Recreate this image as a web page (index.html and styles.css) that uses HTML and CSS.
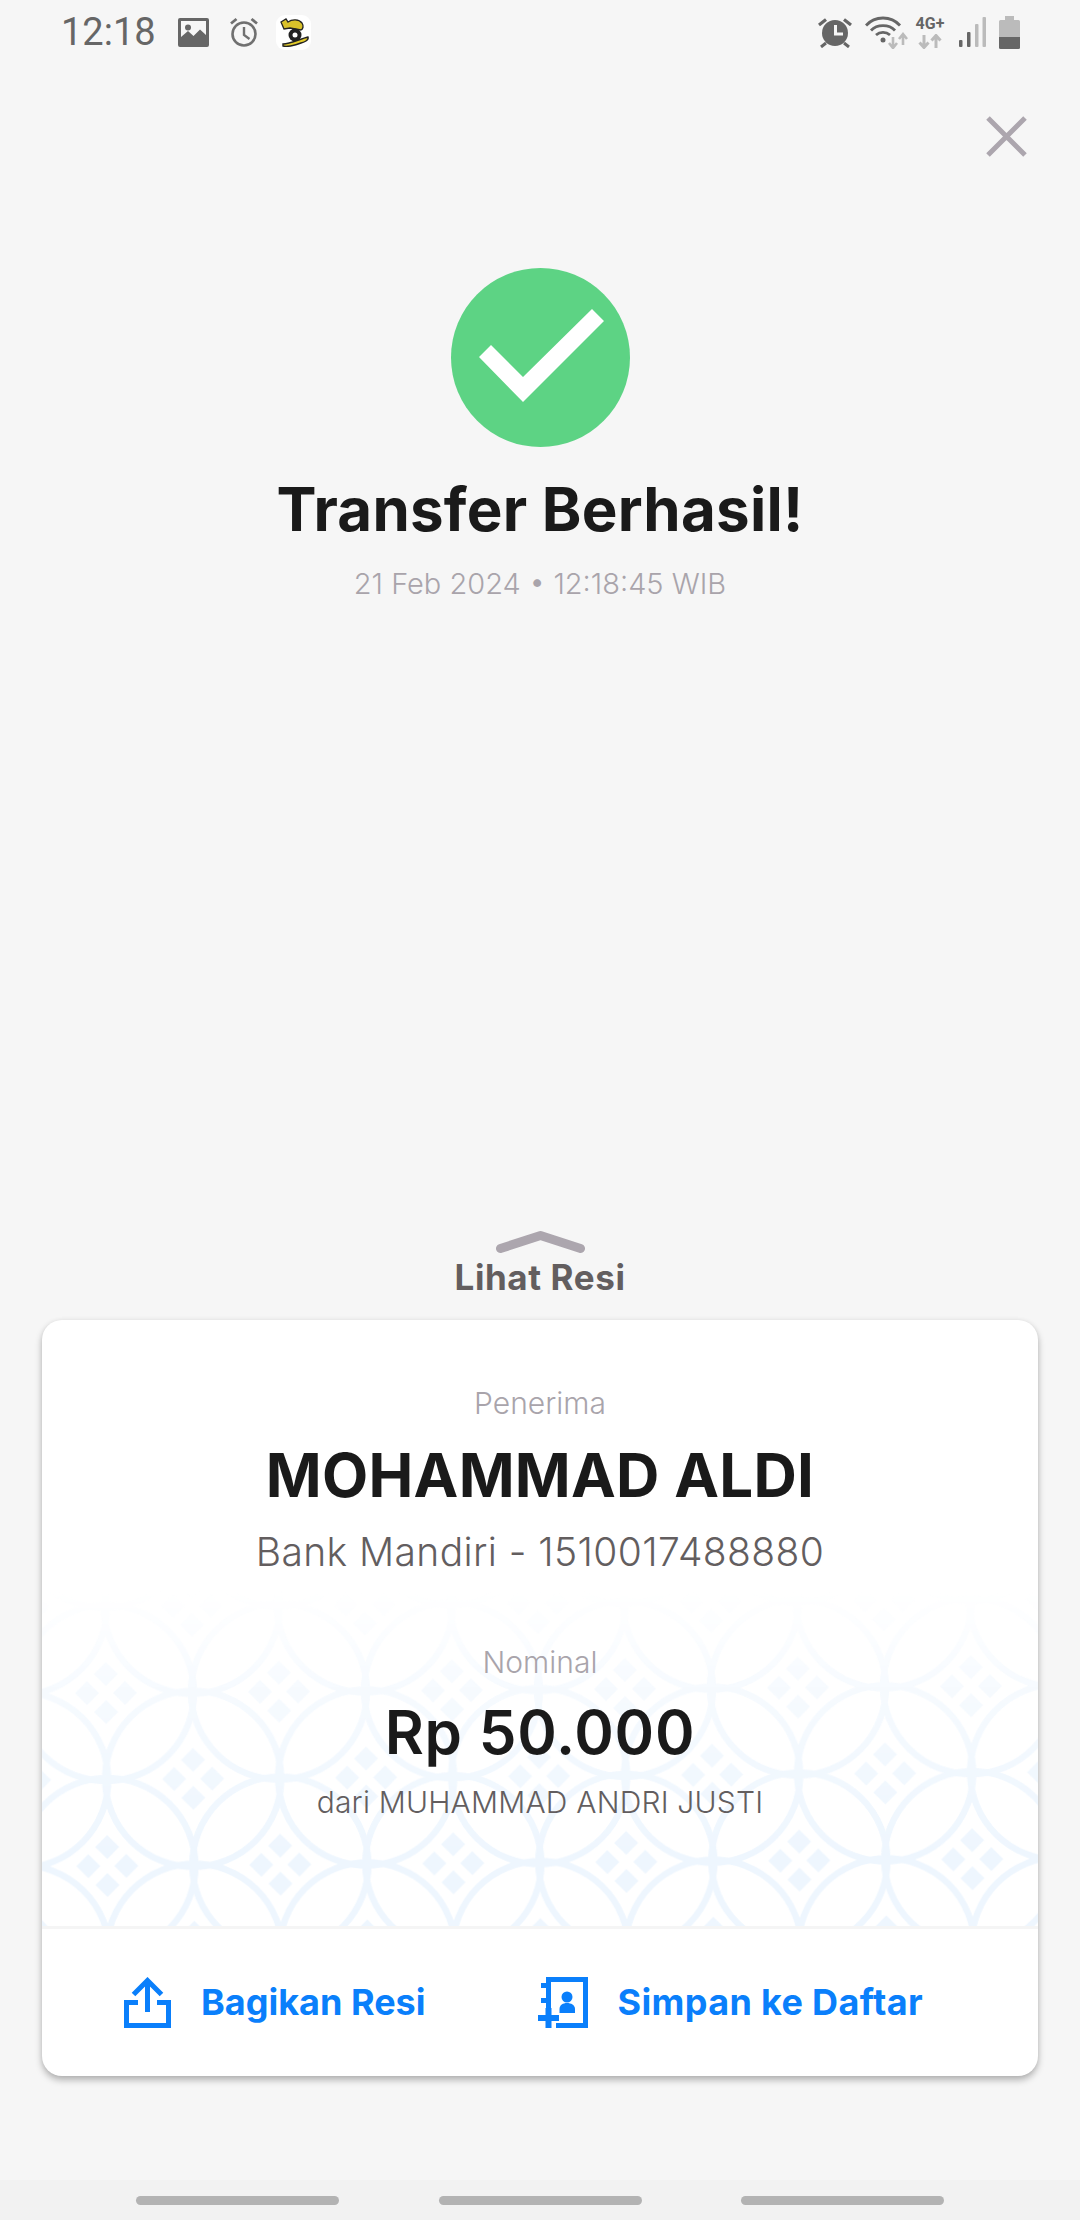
FILE: index.html
```html
<!DOCTYPE html>
<html lang="en">
<head>
    <meta charset="UTF-8">
    <meta name="viewport" content="width=device-width, initial-scale=1.0">
    <title>Transfer Berhasil</title>
    <link rel="stylesheet" href="styles.css">
</head>
<body>
    <div class="screen">
        <!-- Status bar -->
        <div class="status-bar">
            <div class="status-left">
                <span class="clock">12:18</span>
                <svg class="ic-image" width="31" height="29" viewBox="0 0 31 29">
                    <path fill="#666" fill-rule="evenodd" d="M2 0H29a2 2 0 0 1 2 2V27a2 2 0 0 1-2 2H2a2 2 0 0 1-2-2V2A2 2 0 0 1 2 0ZM3 3V19L10 13L15.5 18L22 11.5L28 17V3Z"/>
                    <circle cx="10" cy="9.5" r="3" fill="#666"/>
                </svg>
                <svg class="ic-alarm" width="30" height="30" viewBox="0 0 30 30">
                    <circle cx="15" cy="17" r="11.5" fill="none" stroke="#707070" stroke-width="2.6"/>
                    <path d="M15 10V18L20.5 22" fill="none" stroke="#707070" stroke-width="2.4"/>
                    <path d="M2 6.5L7.5 2M28 6.5L22.5 2" fill="none" stroke="#707070" stroke-width="2.8"/>
                </svg>
                <svg class="ic-app" width="35" height="35" viewBox="0 0 35 35">
                    <rect width="35" height="35" rx="9" fill="#fff"/>
                    <path d="M5 7L10 4L12 7C16 4 23 4 26 8C28 11 27 14 25 15L14 13L8 14Z" fill="#d9c12a" stroke="#222" stroke-width="1.3"/>
                    <circle cx="19" cy="20" r="6.5" fill="#222"/>
                    <circle cx="19" cy="20" r="2.5" fill="#fff"/>
                    <path d="M7 29C14 29 24 24 32 22C33 25 29 27 25 28C18 31 10 32 7 31Z" fill="#e3cb2a" stroke="#222" stroke-width="1.4"/>
                </svg>
            </div>
            <div class="status-right">
                <svg width="34" height="31" viewBox="0 0 34 31">
                    <circle cx="17" cy="16" r="13" fill="#666"/>
                    <path d="M17.5 8V17H25" fill="none" stroke="#f6f6f6" stroke-width="3"/>
                    <path d="M1 8L8 2.5M33 8L26 2.5" fill="none" stroke="#666" stroke-width="3.2"/>
                    <path d="M3 30L8 26M31 30L26 26" fill="none" stroke="#666" stroke-width="3"/>
                </svg>
                <svg width="43" height="33" viewBox="0 0 43 33">
                    <path d="M1 9.5C10 -0.5 26 -0.5 35 9.5M6 14.5C12 8 24 8 30 14.5M11 19C15 15.5 21 15.5 25 19" fill="none" stroke="#666" stroke-width="2.8"/>
                    <circle cx="18" cy="24" r="2.5" fill="#666"/>
                    <path d="M28 21V31M24 27L28 32L32 27" fill="none" stroke="#bbb" stroke-width="2.6"/>
                    <path d="M38 29V19M34 23L38 18L42 23" fill="none" stroke="#bbb" stroke-width="2.6"/>
                </svg>
                <div class="net-type">
                    <span class="net-label">4G+</span>
                    <svg width="24" height="15" viewBox="0 0 24 15">
                        <path d="M6 1V13M1.5 8.5L6 13.5L10.5 8.5" fill="none" stroke="#bbb" stroke-width="3"/>
                        <path d="M18 14V2M13.5 6.5L18 1.5L22.5 6.5" fill="none" stroke="#bbb" stroke-width="3"/>
                    </svg>
                </div>
                <svg class="ic-signal" width="27" height="30" viewBox="0 0 27 30">
                    <rect x="0" y="23" width="3.5" height="7" rx="1" fill="#666"/>
                    <rect x="8" y="15" width="3.5" height="15" rx="1" fill="#666"/>
                    <rect x="16" y="7" width="3.5" height="23" rx="1" fill="#bbb"/>
                    <rect x="23.5" y="0" width="3.5" height="30" rx="1" fill="#bbb"/>
                </svg>
                <svg width="21" height="33" viewBox="0 0 21 33">
                    <path d="M6 0H15V4H19.5A1.5 1.5 0 0 1 21 5.5V21H0V5.5A1.5 1.5 0 0 1 1.5 4H6Z" fill="#bbb"/>
                    <path d="M0 21H21V31.5A1.5 1.5 0 0 1 19.5 33H1.5A1.5 1.5 0 0 1 0 31.5Z" fill="#666"/>
                </svg>
            </div>
        </div>

        <!-- Close button -->
        <div class="close-row">
            <svg width="41" height="41" viewBox="0 0 41 41">
                <path d="M2 2L39 39M39 2L2 39" fill="none" stroke="#aca6ae" stroke-width="5"/>
            </svg>
        </div>

        <!-- Success message -->
        <div class="success">
            <svg class="success-icon" width="179" height="179" viewBox="0 0 179 179">
                <circle cx="89.5" cy="89.5" r="89.5" fill="#5dd384"/>
                <path d="M28 89L40 77L72 109L141 41L153 53L72 134Z" fill="#fff"/>
            </svg>
            <h1 class="success-title">Transfer Berhasil!</h1>
            <p class="success-date">21 Feb 2024 • 12:18:45 WIB</p>
        </div>

        <div class="spacer"></div>

        <!-- Receipt toggle -->
        <div class="receipt-toggle">
            <svg width="89" height="23" viewBox="0 0 89 23">
                <path d="M4.5 18.5L44.5 5.5L84.5 18.5" fill="none" stroke="#aca6ae" stroke-width="9" stroke-linecap="round" stroke-linejoin="round"/>
            </svg>
            <span class="receipt-label">Lihat Resi</span>
        </div>

        <!-- Transfer card -->
        <div class="card">
            <div class="card-body">
                <svg class="kawung" width="996" height="336" viewBox="0 0 996 336">
                    <defs>
                        <g id="kawung-cell">
                            <circle r="88" fill="none" stroke="#eef6fe" stroke-width="6.5"/>
                            <path fill="#eef6fe" d="M0 -31L12 -19L0 -7L-12 -19ZM0 31L12 19L0 7L-12 19ZM-31 0L-19 12L-7 0L-19 -12ZM31 0L19 12L7 0L19 -12Z"/>
                        </g>
                        <pattern id="kawung-tile" width="173" height="173" patternUnits="userSpaceOnUse" patternTransform="translate(64 103) rotate(-0.45)">
                            <use href="#kawung-cell" x="0" y="0"/>
                            <use href="#kawung-cell" x="173" y="0"/>
                            <use href="#kawung-cell" x="0" y="173"/>
                            <use href="#kawung-cell" x="173" y="173"/>
                            <use href="#kawung-cell" x="86.5" y="86.5"/>
                            <use href="#kawung-cell" x="-86.5" y="86.5"/>
                            <use href="#kawung-cell" x="259.5" y="86.5"/>
                            <use href="#kawung-cell" x="86.5" y="-86.5"/>
                            <use href="#kawung-cell" x="86.5" y="259.5"/>
                        </pattern>
                    </defs>
                    <rect width="996" height="336" fill="url(#kawung-tile)"/>
                </svg>
                <p class="field-label">Penerima</p>
                <p class="recipient-name">MOHAMMAD ALDI</p>
                <p class="recipient-bank">Bank Mandiri - 1510017488880</p>
                <p class="field-label nominal-label">Nominal</p>
                <p class="amount">Rp 50.000</p>
                <p class="sender">dari MUHAMMAD ANDRI JUSTI</p>
            </div>
            <div class="card-actions">
                <div class="action">
                    <svg width="47" height="51" viewBox="0 0 47 51">
                        <path d="M14 25.5H2.5V48.5H44.5V25.5H33" fill="none" stroke="#0a7ffb" stroke-width="5"/>
                        <path d="M23.5 35V4M9.5 17.5L23.5 3.5L37.5 17.5" fill="none" stroke="#0a7ffb" stroke-width="5"/>
                    </svg>
                    <span>Bagikan Resi</span>
                </div>
                <div class="action action-save">
                    <svg width="50" height="51" viewBox="0 0 50 51">
                        <path d="M10.5 31V2.5H47.5V48.5H18" fill="none" stroke="#0a7ffb" stroke-width="5"/>
                        <path d="M3 8.5H10M3 23.5H10" fill="none" stroke="#0a7ffb" stroke-width="5"/>
                        <path d="M0 41H21M10.5 31V51" fill="none" stroke="#0a7ffb" stroke-width="6"/>
                        <circle cx="29" cy="20" r="5.5" fill="#0a7ffb"/>
                        <path d="M21.5 36V32C21.5 28 25 26 29 26C33 26 37 28 37 32V36Z" fill="#0a7ffb"/>
                    </svg>
                    <span>Simpan ke Daftar</span>
                </div>
            </div>
        </div>

        <div class="card-gap"></div>

        <!-- Navigation bar -->
        <div class="nav-bar">
            <div class="nav-pill"></div>
            <div class="nav-pill"></div>
            <div class="nav-pill"></div>
        </div>
    </div>
</body>
</html>
```
FILE: styles.css
```css
body {
    margin: 0;
    background-color: #f6f6f6;
    font-family: Inter, "Noto Sans", sans-serif;
}

p, h1 {
    margin: 0;
}

svg {
    display: block;
    flex-shrink: 0;
}

.screen {
    height: 2220px;
    display: flex;
    flex-direction: column;
    overflow: hidden;
}

/* Status bar */
.status-bar {
    height: 66px;
    box-sizing: border-box;
    padding: 0 60px 2px 61px;
    display: flex;
    align-items: center;
    justify-content: space-between;
}

.status-left, .status-right {
    display: flex;
    align-items: center;
}

.clock {
    font-family: Roboto, sans-serif;
    font-size: 38px;
    line-height: 44px;
    color: #666;
}

.ic-image { margin-left: 22px; }
.ic-alarm { margin-left: 20px; }
.ic-app { margin-left: 17px; }

.status-right {
    gap: 13px;
}

.net-type {
    width: 32px;
    margin-left: -7px;
    display: flex;
    flex-direction: column;
    align-items: center;
    gap: 3px;
}

.net-label {
    font-family: Roboto, sans-serif;
    font-weight: 700;
    font-size: 16px;
    line-height: 15px;
    color: #666;
}

/* Close button */
.close-row {
    margin-top: 50px;
    padding-right: 53px;
    display: flex;
    justify-content: flex-end;
}

/* Success message */
.success {
    margin-top: 111px;
    display: flex;
    flex-direction: column;
    align-items: center;
}

.success-title {
    margin-top: 27px;
    font-size: 60px;
    line-height: 70px;
    font-weight: 700;
    letter-spacing: 0.25px;
    color: #1a1a1a;
}

.success-date {
    margin-top: 20px;
    font-size: 29px;
    line-height: 40px;
    font-weight: 300;
    color: #a9a4ab;
}

.spacer {
    flex: 1;
}

/* Receipt toggle */
.receipt-toggle {
    display: flex;
    flex-direction: column;
    align-items: center;
    gap: 9px;
}

.receipt-label {
    font-size: 35px;
    line-height: 30px;
    font-weight: 700;
    letter-spacing: 0.6px;
    color: #635e5f;
}

/* Card */
.card {
    margin: 28px 42px 0;
    height: 756px;
    display: flex;
    flex-direction: column;
    background-color: #fff;
    border-radius: 20px;
    box-shadow: 0 4px 7px rgba(0, 0, 0, 0.28), 0 0 5px rgba(0, 0, 0, 0.05);
    overflow: hidden;
}

.card-body {
    position: relative;
    height: 606px;
    box-sizing: border-box;
    padding-top: 65px;
    text-align: center;
}

/* Batik pattern behind the text, fades out upwards */
.kawung {
    position: absolute;
    left: 0;
    bottom: 0;
    -webkit-mask-image: linear-gradient(to top, #000 20%, rgba(0, 0, 0, 0.8) 46%, rgba(0, 0, 0, 0.5) 71%, rgba(0, 0, 0, 0.15) 91%, transparent 100%);
    mask-image: linear-gradient(to top, #000 20%, rgba(0, 0, 0, 0.8) 46%, rgba(0, 0, 0, 0.5) 71%, rgba(0, 0, 0, 0.15) 91%, transparent 100%);
}

.card-body p {
    position: relative;
}

.field-label {
    font-size: 30px;
    line-height: 36px;
    font-weight: 300;
    color: #a9a4ab;
}

.recipient-name {
    margin-top: 19px;
    font-size: 60px;
    line-height: 70px;
    font-weight: 700;
    letter-spacing: 0.27px;
    color: #1a1a1a;
}

.recipient-bank {
    margin-top: 17px;
    font-size: 39px;
    line-height: 50px;
    font-weight: 300;
    letter-spacing: 0.4px;
    color: #635e5f;
}

.nominal-label {
    margin-top: 67px;
}

.amount {
    margin-top: 17px;
    font-size: 60px;
    line-height: 70px;
    font-weight: 600;
    letter-spacing: 0.8px;
    color: #1a1a1a;
}

.sender {
    margin-top: 17px;
    font-size: 30px;
    line-height: 36px;
    font-weight: 300;
    letter-spacing: 0.2px;
    color: #635e5f;
}

/* Card actions */
.card-actions {
    flex: 1;
    padding-left: 82px;
    display: flex;
    align-items: center;
    gap: 112px;
    border-top: 3px solid #f5f5f5;
}

.action {
    display: flex;
    align-items: center;
    gap: 30px;
    font-size: 36px;
    line-height: 51px;
    font-weight: 700;
    color: #0a7ffb;
}

.action-save {
    letter-spacing: 0.35px;
}

.card-gap {
    height: 104px;
}

/* Navigation bar */
.nav-bar {
    height: 40px;
    box-sizing: border-box;
    padding: 16px 136px 0;
    display: flex;
    justify-content: space-between;
    background-color: #f2f2f2;
}

.nav-pill {
    width: 203px;
    height: 9px;
    border-radius: 5px;
    background-color: #b3b3b3;
}
```
